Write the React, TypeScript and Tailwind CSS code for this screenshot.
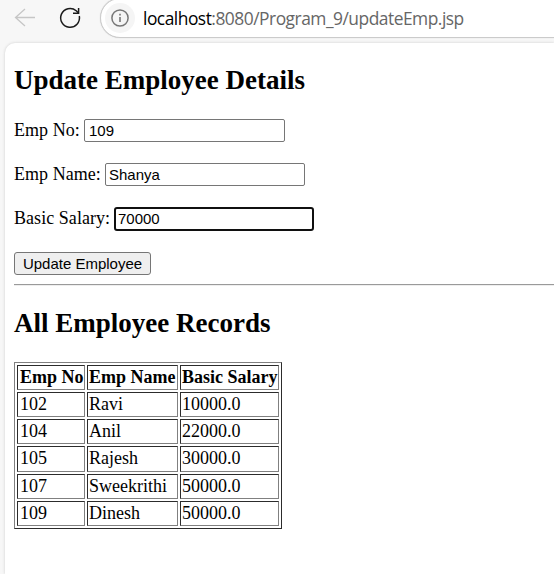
import React from "react";

const rows = [
  { id: "102", name: "Ravi", salary: "10000.0", h: "h-[25px]" },
  { id: "104", name: "Anil", salary: "22000.0", h: "h-[25px]" },
  { id: "105", name: "Rajesh", salary: "30000.0", h: "h-[26px]" },
  { id: "107", name: "Sweekrithi", salary: "50000.0", h: "h-[25px]" },
  { id: "109", name: "Dinesh", salary: "50000.0", h: "h-[25px]" },
];

const cell =
  "border border-t-[#2c2c2c] border-l-[#2c2c2c] border-r-[#808080] border-b-[#808080] leading-[23px] whitespace-nowrap";
const field =
  "h-[23px] pr-0 py-0 text-[15px] text-black bg-white font-['Liberation_Sans',Arial,sans-serif]";

function Toolbar() {
  return (
    <header className="flex h-[43px] shrink-0 overflow-hidden">
      <svg className="mt-[6px] ml-[13px] h-6 w-6 shrink-0" viewBox="0 0 24 24" fill="none" stroke="#c6c6c6" strokeWidth="1.3">
        <path d="M22 11.5H2.5M12 3L2.5 11.5L12 20" />
      </svg>
      <svg className="mt-[6px] ml-[21px] h-6 w-6 shrink-0" viewBox="0 0 24 24" fill="none" stroke="#1b1b1b" strokeWidth="1.5">
        <path d="M21.3 10A9.4 9.4 0 1 1 18.2 4.7L20.5 7" />
        <path d="M20.6 2V7.3H15" />
      </svg>
      <div className="-mt-[2px] ml-[18px] flex h-[40px] w-[600px] shrink-0 items-center rounded-l-[20px] border border-[#cbcbcb] bg-white pl-[4px] shadow-[0_0_1px_#cccccc]">
        <div className="flex h-[30px] w-[30px] items-center justify-center rounded-full bg-[#f5f5f5]">
          <svg className="h-5 w-5" viewBox="0 0 20 20" fill="none" stroke="#777777" strokeWidth="1.5">
            <circle cx="10" cy="10" r="8.1" />
            <path d="M10 9v5M10 5.8v1.7" strokeWidth="1.6" />
          </svg>
        </div>
        <span className="ml-[8px] whitespace-nowrap font-['Open_Sans','Noto_Sans',sans-serif] text-[17.4px] tracking-[-0.5px] text-[#666666]">
          <span className="text-black">localhost</span>:8080/Program_9/updateEmp.jsp
        </span>
      </div>
    </header>
  );
}

export default function App() {
  return (
    <div className="flex h-[574px] w-[554px] flex-col overflow-hidden bg-[#f7f7f7]">
      <Toolbar />
      <main className="ml-[5px] min-h-0 flex-1 rounded-tl-[10px] bg-white pl-[9px] font-['Liberation_Serif','Times_New_Roman',serif] text-[18px] text-black shadow-[0_0_3px_#cccccc]">
        <h2 className="h-[76px] pt-[22px] text-[27px] leading-[30px] font-bold">Update Employee Details</h2>
        <form onSubmit={(e) => e.preventDefault()}>
          <div className="flex h-[44px] items-start leading-[23px]">
            <label className="w-[70px] tracking-[0.05px] whitespace-nowrap">Emp No:</label>
            <input className={`${field} w-[201px] rounded-[2px] border border-[#767676] pl-[4px]`} defaultValue="109" />
          </div>
          <div className="flex h-[44px] items-start leading-[23px]">
            <label className="w-[91px] tracking-[0.05px] whitespace-nowrap">Emp Name:</label>
            <input className={`${field} w-[200px] rounded-[2px] border border-[#767676] pl-[3px]`} defaultValue="Shanya" />
          </div>
          <div className="flex h-[45px] items-start leading-[23px]">
            <label className="w-[100px] tracking-[0.05px] whitespace-nowrap">Basic Salary:</label>
            <input className="h-[24px] w-[200px] rounded-[3px] border-2 border-[#101010] bg-white pt-0 pb-[1px] pr-0 pl-[2px] font-['Liberation_Sans',Arial,sans-serif] text-[15px] text-black" defaultValue="70000" />
          </div>
          <button className="block h-[23px] w-[137px] rounded-[3px] border border-[#767676] bg-[#efefef] text-center font-['Liberation_Sans',Arial,sans-serif] text-[15px] leading-[21px] whitespace-nowrap">
            Update Employee
          </button>
        </form>
        <hr className="mt-[9px] h-[2px] border-t border-b border-t-[#9a9a9a] border-b-[#eeeeee]" />
        <h2 className="h-[76px] pt-[22px] text-[27px] leading-[30px] font-bold">All Employee Records</h2>
        <div role="table" className="flex w-[268px] flex-col gap-[2px] border border-t-[#808080] border-r-[#2c2c2c] border-b-[#2c2c2c] border-l-[#808080] p-[2px]">
          <div role="row" className="grid h-[25px] grid-cols-[68px_91px_99px] gap-[2px] font-bold">
            <div className={`${cell} pl-[2px]`}>Emp No</div>
            <div className={`${cell} pl-[1px]`}>Emp Name</div>
            <div className={`${cell} pl-[1px]`}>Basic Salary</div>
          </div>
          {rows.map((r) => (
            <div role="row" key={r.id} className={`grid grid-cols-[68px_91px_99px] gap-[2px] ${r.h}`}>
              <div className={`${cell} pl-[2px]`}>{r.id}</div>
              <div className={`${cell} pl-[1px]`}>{r.name}</div>
              <div className={`${cell} pl-[1px]`}>{r.salary}</div>
            </div>
          ))}
        </div>
      </main>
    </div>
  );
}
